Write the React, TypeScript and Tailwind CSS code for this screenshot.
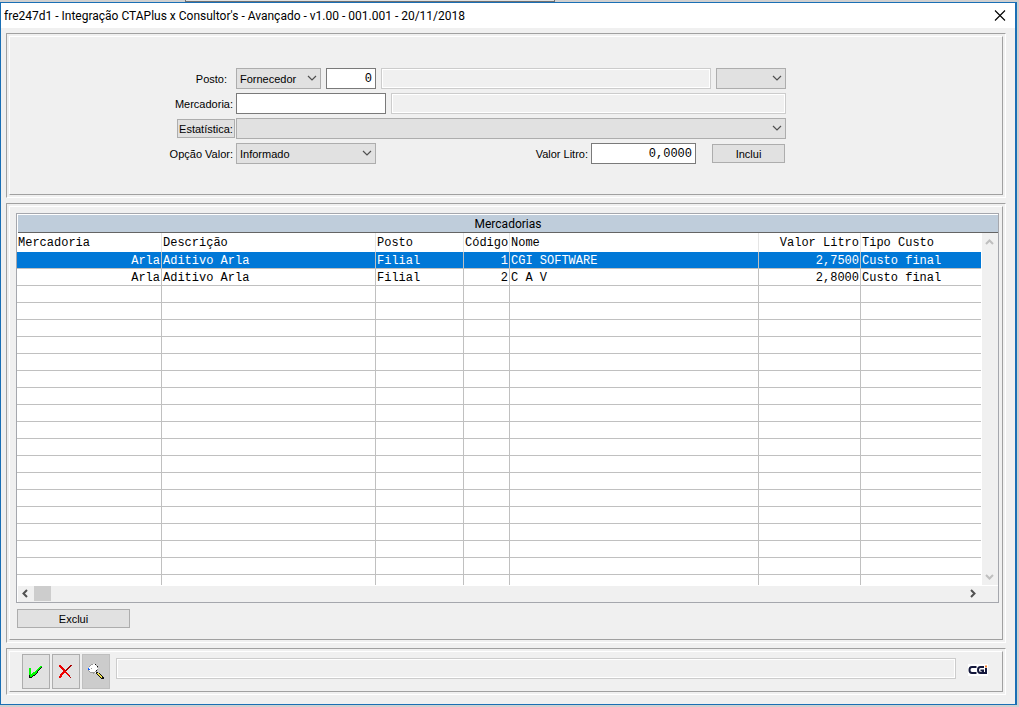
import React from "react";

type Align = "left" | "right";

const columns: { title: string; width: string; align: Align; headAlign: Align }[] = [
  { title: "Mercadoria", width: "w-[145px]", align: "right", headAlign: "left" },
  { title: "Descrição", width: "w-[214px]", align: "left", headAlign: "left" },
  { title: "Posto", width: "w-[88px]", align: "left", headAlign: "left" },
  { title: "Código", width: "w-[46px]", align: "right", headAlign: "left" },
  { title: "Nome", width: "", align: "left", headAlign: "left" },
  { title: "Valor Litro", width: "w-[102px]", align: "right", headAlign: "right" },
  { title: "Tipo Custo", width: "w-[120px]", align: "left", headAlign: "left" },
];

const rows: string[][] = [
  ["Arla", "Aditivo Arla", "Filial", "1", "CGI SOFTWARE", "2,7500", "Custo final"],
  ["Arla", "Aditivo Arla", "Filial", "2", "C A V", "2,8000", "Custo final"],
];

const emptyRows = Array.from({ length: 17 }, (_, i) => i);

const palette: Record<string, string> = {
  g: "#00ff00",
  k: "#101010",
  r: "#ee0000",
  d: "#a80000",
  w: "#ffffff",
  s: "#9a9a9a",
  b: "#1060ff",
  y: "#f0e040",
};

const checkIcon = [
  "...........gg",
  "..........ggk",
  "gg.......ggk.",
  "gg......ggk..",
  "gg.....ggk...",
  "gg....ggk....",
  "gg..ggggk....",
  "gg.ggggk.....",
  "ggggggk......",
  "kgggkk.......",
  "kggk.........",
  "kkk..........",
];

const crossIcon = [
  "rr.........dd",
  "rrr.......dd.",
  ".rrr.....dd..",
  "..rrr...dd...",
  "...rrr.dd....",
  "....rrdd.....",
  "....rrr......",
  "...rrrrr.....",
  "..rrr..rr....",
  ".rrr....rr...",
  ".rr......rr..",
  "rrr.......d..",
  "rr.........d.",
];

const searchIcon = [
  "...sswwk........",
  "..swwwwws.......",
  ".swwwwwwwk......",
  ".wwwwwwwws......",
  "bwwswwwwww......",
  "bbwwwwwwws......",
  "swwwwwwwk.......",
  ".swwwwwss.......",
  "..ssssswkk......",
  ".....s..kyyk....",
  ".........kyyk...",
  "..........kyyk..",
  "...........kyyk.",
  "............kykk",
  ".............kkk",
];

/* Draws a small bitmap icon, one square per character. */
function PixelIcon({ map, x, y }: { map: string[]; x: number; y: number }) {
  return (
    <svg viewBox="0 0 16 16" className="size-4" shapeRendering="crispEdges" aria-hidden="true">
      {map.flatMap((line, r) =>
        line
          .split("")
          .map((ch, c) => (palette[ch] ? <rect key={`${r}-${c}`} x={c + x} y={r + y} width="1" height="1" fill={palette[ch]} /> : null)),
      )}
    </svg>
  );
}

function Panel({ className = "", children }: { className?: string; children: React.ReactNode }) {
  return (
    <section className="flex flex-col border border-t-[#a0a0a0] border-l-[#a0a0a0] border-r-white border-b-white p-[2px]">
      <div className={`flex-1 border border-t-white border-l-white border-r-[#a0a0a0] border-b-[#a0a0a0] ${className}`}>
        {children}
      </div>
    </section>
  );
}

function Select({ id, label, width, options }: { id: string; label?: string; width: string; options: string[] }) {
  return (
    <div className={`relative h-[21px] ${width}`}>
      <select
        id={id}
        aria-label={label}
        className="block h-full w-full appearance-none border border-[#adadad] bg-[#e1e1e1] pt-[2px] pr-4 pl-[3px] text-[11px] leading-[17px] text-black outline-none"
      >
        {options.map((o) => (
          <option key={o}>{o}</option>
        ))}
      </select>
      <svg
        viewBox="0 0 10 8"
        className="pointer-events-none absolute top-[6px] right-1 h-2 w-[10px] fill-none stroke-[#505050]"
        strokeWidth="1.2"
        aria-hidden="true"
      >
        <path d="M1 2 L5 6 L9 2" />
      </svg>
    </div>
  );
}

const editBox = "h-[21px] border border-[#7a7a7a] bg-white px-[3px] text-right font-['Liberation_Mono',monospace] text-[12px] outline-none";
const readBox = "h-[21px] min-w-0 flex-1 border border-[#cccccc] bg-[#f0f0f0] px-[3px] outline-none inset-ring inset-ring-white";
const pushButton = "h-[19px] border border-[#adadad] bg-[#e1e1e1] pt-[1px] text-[11px] leading-4";
const rowClass = "flex h-[21px] items-center";
const labelClass = "w-[62px] shrink-0 pt-[2px] pr-[3px] whitespace-nowrap flex justify-end";
const toolButton = "flex h-[35px] w-7 items-center justify-center border";

export default function App() {
  return (
    <div className="flex min-h-screen flex-col bg-[#d0d0d0] pr-[2px] pb-[2px] font-['Liberation_Sans',Arial,sans-serif] text-[11px] text-black">
      <div className="flex h-[2px] pl-[185px]">
        <div className="w-[370px] border-x border-b border-[#707070] bg-[#e1e1e1]" />
      </div>
      <main className="flex min-w-0 flex-1 flex-col border border-r-2 border-[#1a6fb5] bg-[#f0f0f0]">
        <header className="flex h-[25px] items-center justify-between bg-white pr-[9px] pl-[3px]">
          <h1 className="font-[Roboto,sans-serif] text-[12px] whitespace-nowrap">
            fre247d1 - Integração CTAPlus x Consultor's - Avançado - v1.00 - 001.001 - 20/11/2018
          </h1>
          <button aria-label="Fechar" className="flex size-3 items-center justify-center">
            <svg viewBox="0 0 12 12" className="size-3 stroke-black" strokeWidth="1.1">
              <path d="M1 0.5 L11 10.5 M11 0.5 L1 10.5" />
            </svg>
          </button>
        </header>

        <div className="flex flex-1 flex-col gap-[5px] pt-[5px] pr-[9px] pb-[9px] pl-[5px]">
          <Panel className="pt-[31px] pb-[30px] pl-[164px]">
            <form className="flex max-w-[612px] flex-col gap-1" onSubmit={(e) => e.preventDefault()}>
              <div className={rowClass}>
                <label htmlFor="posto" className="flex w-[62px] shrink-0 justify-end pt-[2px] pr-[9px]">Posto:</label>
                <Select id="posto" width="w-[85px]" options={["Fornecedor", "Filial"]} />
                <input aria-label="Código do posto" defaultValue="0" className={`ml-[5px] w-[50px] ${editBox}`} />
                <input aria-label="Nome do posto" readOnly className={`ml-[5px] ${readBox}`} />
                <Select id="uf" label="Filial do posto" width="ml-[5px] w-[70px]" options={[""]} />
              </div>
              <div className={rowClass}>
                <label htmlFor="mercadoria" className={labelClass}>Mercadoria:</label>
                <input id="mercadoria" className={`w-[150px] ${editBox}`} />
                <input aria-label="Nome da mercadoria" readOnly className={`ml-[5px] ${readBox}`} />
              </div>
              <div className={rowClass}>
                <div className="flex w-[62px] shrink-0 justify-end pr-[1px]">
                  <button type="button" className={`w-[58px] whitespace-nowrap ${pushButton}`}>Estatística:</button>
                </div>
                <Select id="estatistica" label="Estatística" width="flex-1" options={[""]} />
              </div>
              <div className={rowClass}>
                <label htmlFor="opcao" className={labelClass}>Opção Valor:</label>
                <Select id="opcao" width="w-[140px]" options={["Informado"]} />
                <label htmlFor="valor" className="ml-auto pt-[2px] pr-[3px]">Valor Litro:</label>
                <input id="valor" defaultValue="0,0000" className={`w-[105px] ${editBox}`} />
                <button className={`mr-[1px] ml-4 w-[73px] ${pushButton}`}>Inclui</button>
              </div>
            </form>
          </Panel>

          <Panel className="px-[6px] pt-[6px] pb-[11px]">
            <div className="-mr-[3px] border border-[#a5a7ad] bg-white pt-[1px]">
              <h2 className="ml-[1px] h-[18px] border-b border-[#646464] bg-[#bfcddb] text-center font-[Roboto,sans-serif] text-[12px] leading-[18px]">
                Mercadorias
              </h2>
              <div className="flex">
                <div className="min-w-0 flex-1">
                  <table className="w-full table-fixed border-separate border-spacing-0 font-['Liberation_Mono',monospace] text-[12px] leading-[14px]">
                    <thead>
                      <tr className="h-[19px]">
                        {columns.map((c, i) => (
                          <th
                            key={c.title}
                            className={`p-0 px-[1px] font-normal whitespace-nowrap ${c.width} ${c.headAlign === "right" ? "text-right" : "text-left"} ${i < 6 ? "border-r border-[#e5e5e5]" : ""}`}
                          >
                            {c.title}
                          </th>
                        ))}
                      </tr>
                    </thead>
                    <tbody>
                      {rows.map((r, ri) => (
                        <tr key={ri} className={`h-[17px] ${ri === 0 ? "bg-[#0078d7] text-white" : ""}`}>
                          {r.map((v, i) => (
                            <td
                              key={i}
                              className={`border-b border-[#c0c0c0] px-[1px] pt-[2px] pb-0 whitespace-nowrap ${columns[i].align === "right" ? "text-right" : ""} ${i < 6 ? "border-r" : ""}`}
                            >
                              {v}
                            </td>
                          ))}
                        </tr>
                      ))}
                      {emptyRows.map((n) => (
                        <tr key={n} className="h-[17px]">
                          {columns.map((c, i) => (
                            <td key={c.title} className={`border-b border-[#c0c0c0] p-0 ${i < 6 ? "border-r" : ""}`} />
                          ))}
                        </tr>
                      ))}
                      <tr className="h-[10px]">
                        {columns.map((c, i) => (
                          <td key={c.title} className={`border-[#c0c0c0] p-0 ${i < 6 ? "border-r" : ""}`} />
                        ))}
                      </tr>
                    </tbody>
                  </table>
                </div>
                <div className="ml-[1px] flex w-4 flex-col items-center justify-between bg-[#f0f0f0] pt-[5px] pb-[4px] text-[#bfbfbf]">
                  <svg viewBox="0 0 10 8" className="h-2 w-[10px] fill-none stroke-current" strokeWidth="2"><path d="M1 6 L4.5 2.5 L8 6" /></svg>
                  <svg viewBox="0 0 10 8" className="h-2 w-[10px] fill-none stroke-current" strokeWidth="2"><path d="M1 2 L4.5 5.5 L8 2" /></svg>
                </div>
              </div>
              <div className="mt-[1px] ml-[1px] flex h-4 items-start bg-[#f0f0f0] pr-[21px] text-[#505050]">
                <svg viewBox="0 0 16 16" className="size-4 fill-none stroke-current" strokeWidth="2"><path d="M9 4 L5.5 7.5 L9 11" /></svg>
                <div className="h-[15px] w-[17px] bg-[#cdcdcd]" />
                <svg viewBox="0 0 16 16" className="ml-auto size-4 fill-none stroke-current" strokeWidth="2"><path d="M10 4 L13.5 7.5 L10 11" /></svg>
              </div>
            </div>
            <button className={`mt-[6px] ml-[1px] block w-[113px] ${pushButton}`}>Exclui</button>
          </Panel>

          <Panel className="flex items-start gap-[2px] py-[2px] pr-[14px] pl-3">
            <button aria-label="Confirmar" className={`border-[#adadad] bg-[#e1e1e1] ${toolButton}`}>
              <PixelIcon map={checkIcon} x={1} y={2} />
            </button>
            <button aria-label="Cancelar" className={`border-[#adadad] bg-[#e1e1e1] ${toolButton}`}>
              <PixelIcon map={crossIcon} x={1} y={1} />
            </button>
            <button aria-label="Pesquisar" className={`border-[#bfbfbf] bg-[#cccccc] ${toolButton}`}>
              <PixelIcon map={searchIcon} x={0} y={0} />
            </button>
            <input aria-label="Mensagem" readOnly className={`mt-1 ml-1 ${readBox}`} />
            <svg viewBox="0 0 20 12" className="mt-[10px] ml-[10px] h-3 w-5 fill-none stroke-[#14183c]" strokeWidth="2" role="img" aria-label="CGI">
              <path d="M0 0 H20 V12 H0 Z" fill="#fff" stroke="none" />
              <path d="M8.5 3 H4 Q1.5 3 1.5 6 T4 9 H8.5" />
              <path d="M16 3 H12.5 Q10 3 10 6 T12.5 9 H15 V6.5 H12.5" />
              <path d="M18 4 V10 M15 9 H18" />
              <path d="M17 2.5 H19" stroke="#f08030" />
            </svg>
          </Panel>
        </div>
      </main>
    </div>
  );
}
